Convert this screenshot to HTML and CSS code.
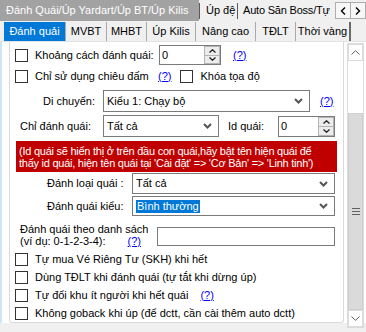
FILE: index.html
```html
<html>
<head>
<meta charset="utf-8">
<link rel="stylesheet" href="styles.css">
</head>
<body>

<div class="tabs-top">
  <div class="ttab active w199">Đánh Quái/Úp Yardart/Úp BT/Úp Kilis</div>
  <span class="vsep"></span>
  <div class="ttab w37">Úp đệ</div>
  <span class="vsep"></span>
  <div class="ttab clip">Auto Săn Boss/Tự</div>
  <div class="arrows">
    <span class="arr"><svg width="6" height="8" viewBox="0 0 6 8"><polyline points="5,0.5 1.5,4 5,7.5" fill="none" stroke="#000" stroke-width="1.4"/></svg></span>
    <span class="arr"><svg width="6" height="8" viewBox="0 0 6 8"><polyline points="1,0.5 4.5,4 1,7.5" fill="none" stroke="#000" stroke-width="1.4"/></svg></span>
  </div>
</div>

<div class="tabs-sub">
  <div class="stab active w62">Đánh quải</div>
  <div class="stab w41">MVBT</div>
  <div class="stab w40">MHBT</div>
  <div class="stab w49">Úp Kilis</div>
  <div class="stab w60">Nâng cao</div>
  <div class="stab w40">TĐLT</div>
  <div class="stab last w55">Thời vàng</div>
</div>

<div class="page">
  <div class="group">

    <div class="row ra">
      <span class="cb"></span>
      <span class="lbl w124">Khoảng cách đánh quái:</span>
      <div class="num w62">
        <span class="val">0</span>
        <div class="spin">
          <span class="sb"><svg width="7" height="4" viewBox="0 0 7 4"><polyline points="0.5,3.5 3.5,0.8 6.5,3.5" fill="none" stroke="#222" stroke-width="1.3"/></svg></span>
          <span class="sb"><svg width="7" height="4" viewBox="0 0 7 4"><polyline points="0.5,0.5 3.5,3.2 6.5,0.5" fill="none" stroke="#222" stroke-width="1.3"/></svg></span>
        </div>
      </div>
      <a class="help ml12">(?)</a>
    </div>

    <div class="row rb">
      <span class="cb"></span>
      <span class="lbl w123">Chỉ sử dụng chiêu đấm</span>
      <a class="help">(?)</a>
      <span class="cb ml9"></span>
      <span class="lbl">Khóa tọa độ</span>
    </div>

    <div class="row rc">
      <span class="txt ml33 w60">Di chuyển:</span>
      <div class="sel w207">
        <span>Kiểu 1: Chạy bộ</span>
        <svg class="chev" width="9" height="6" viewBox="0 0 9 6"><polyline points="1,1 4.5,4.5 8,1" fill="none" stroke="#555" stroke-width="2"/></svg>
      </div>
      <a class="help ml10">(?)</a>
    </div>

    <div class="row rd">
      <span class="txt ml10 w83">Chỉ đánh quái:</span>
      <div class="sel w116">
        <span>Tất cả</span>
        <svg class="chev" width="9" height="6" viewBox="0 0 9 6"><polyline points="1,1 4.5,4.5 8,1" fill="none" stroke="#555" stroke-width="2"/></svg>
      </div>
      <span class="txt ml9 w50">Id quái:</span>
      <div class="num w57 h21">
        <span class="val">0</span>
        <div class="spin">
          <span class="sb"><svg width="7" height="4" viewBox="0 0 7 4"><polyline points="0.5,3.5 3.5,0.8 6.5,3.5" fill="none" stroke="#222" stroke-width="1.3"/></svg></span>
          <span class="sb"><svg width="7" height="4" viewBox="0 0 7 4"><polyline points="0.5,0.5 3.5,3.2 6.5,0.5" fill="none" stroke="#222" stroke-width="1.3"/></svg></span>
        </div>
      </div>
    </div>

    <div class="note">(Id quái sẽ hiển thị ở trên đầu con quái,hãy bật tên hiện quái để<br>thấy id quái, hiện tên quái tại 'Cài đặt' =&gt; 'Cơ Bản' =&gt; 'Linh tinh')</div>

    <div class="row re">
      <span class="txt ml37 w85">Đánh loại quái :</span>
      <div class="sel w203 h21">
        <span>Tất cả</span>
        <svg class="chev" width="9" height="6" viewBox="0 0 9 6"><polyline points="1,1 4.5,4.5 8,1" fill="none" stroke="#555" stroke-width="2"/></svg>
      </div>
    </div>

    <div class="row rf">
      <span class="txt ml37 w85">Đánh quái kiểu:</span>
      <div class="sel w203 h20">
        <span class="hl">Bình thường</span>
        <svg class="chev" width="9" height="6" viewBox="0 0 9 6"><polyline points="1,1 4.5,4.5 8,1" fill="none" stroke="#555" stroke-width="2"/></svg>
      </div>
    </div>

    <div class="row rg">
      <span class="txt ml10 w137 two">Đánh quái theo danh sách<br>(ví dụ: 0-1-2-3-4):<a class="help ml22">(?)</a></span>
      <div class="input w178"></div>
    </div>

    <div class="row rk">
      <span class="cb"></span>
      <span class="lbl">Tự mua Vé Riêng Tư (SKH) khi hết</span>
    </div>
    <div class="row rk">
      <span class="cb"></span>
      <span class="lbl">Dùng TĐLT khi đánh quái (tự tắt khi dừng úp)</span>
    </div>
    <div class="row rk">
      <span class="cb"></span>
      <span class="lbl">Tự đổi khu ít người khi hết quái</span>
      <a class="help ml12">(?)</a>
    </div>
    <div class="row rk">
      <span class="cb"></span>
      <span class="lbl">Không goback khi úp (để dctt, cần cài thêm auto dctt)</span>
    </div>

  </div>

  <div class="vscroll">
    <span class="vbtn"><svg width="9" height="5" viewBox="0 0 9 5"><polyline points="0.5,4.5 4.5,0.7 8.5,4.5" fill="none" stroke="#606060" stroke-width="1"/></svg></span>
    <span class="track"></span>
    <span class="thumb"><svg width="8" height="7" viewBox="0 0 8 7"><rect x="0" y="0" width="8" height="1" fill="#606060"/><rect x="0" y="3" width="8" height="1" fill="#606060"/><rect x="0" y="6" width="8" height="1" fill="#606060"/></svg></span>
    <span class="vbtn"><svg width="9" height="5" viewBox="0 0 9 5"><polyline points="0.5,0.5 4.5,4.3 8.5,0.5" fill="none" stroke="#606060" stroke-width="1"/></svg></span>
  </div>
</div>

</body>
</html>
```

FILE: styles.css
```css
* {
  box-sizing: border-box;
}

body {
  margin: 0;
  width: 366px;
  height: 332px;
  overflow: hidden;
  background: #f0f0f0;
  color: #000;
  font-family: "Liberation Sans", Arial, sans-serif;
  font-size: 11px;
  line-height: 13px;
}

/* top tab strip */
.tabs-top {
  display: flex;
  height: 21px;
  align-items: center;
}

.ttab {
  height: 21px;
  padding: 4px 0 0 6px;
  white-space: nowrap;
  overflow: hidden;
}

.ttab.active {
  background: #a2a2a2;
  color: #fff;
}

.ttab.clip {
  flex: 1;
  padding-left: 5px;
  letter-spacing: -0.2px;
}

.vsep {
  width: 1px;
  height: 16px;
  background: #5a5a5a;
}

.arrows {
  display: flex;
  width: 31px;
  height: 17px;
}

.arr {
  flex: 1;
  display: flex;
  align-items: center;
  justify-content: center;
  border: 1px solid #adadad;
  background: #f7f7f7;
}

.arr + .arr {
  border-left: none;
}

/* second tab strip */
.tabs-sub {
  display: flex;
  height: 21px;
  padding: 1px 0 0 4px;
  border-bottom: 1px solid #e3e3e3;
}

.stab {
  height: 19px;
  padding-top: 3px;
  text-align: center;
  border-right: 1px solid #a9a9a9;
  white-space: nowrap;
}

.stab.active {
  background: #0078d7;
  color: #fff;
}

.stab.last {
  border-right: 2px solid #6a6a6a;
}

/* page */
.page {
  display: flex;
  height: 281px;
  background: #fff;
  border-left: 2px solid #cfe5f7;
}

.group {
  width: 335px;
  height: 281px;
  margin-left: 7px;
  border: 1px solid #dadada;
  border-top: none;
  border-radius: 0 0 3px 3px;
}

.row {
  display: flex;
  align-items: center;
  padding-left: 5px;
}

.ra { height: 20px; margin-top: 3px; }
.rb { height: 18px; margin-top: 2px; }
.rc { height: 22px; margin-top: 5px; padding-left: 0; }
.rd { height: 22px; margin-top: 3px; padding-left: 0; }
.re { height: 21px; margin-top: 1px; padding-left: 0; }
.rf { height: 20px; margin-top: 2px; padding-left: 0; }
.rg { height: 23px; margin-top: 7px; padding-left: 0; align-items: flex-start; }
.rk { height: 18px; }
.rg + .rk { margin-top: 4px; }

.cb {
  flex: none;
  width: 13px;
  height: 13px;
  border: 1px solid #333;
  background: #fff;
}

.lbl {
  margin-left: 7px;
  white-space: nowrap;
}

.txt {
  flex: none;
  white-space: nowrap;
}

.two {
  line-height: 12px;
}

.help {
  color: #0000ff;
  text-decoration: underline;
  white-space: nowrap;
}

/* controls */
.num {
  flex: none;
  display: flex;
  height: 20px;
  border: 1px solid #7a7a7a;
  background: #fff;
}

.val {
  flex: 1;
  padding: 3px 0 0 2px;
}

.spin {
  width: 16px;
  display: flex;
  flex-direction: column;
  background: #e8e8e8;
}

.sb {
  flex: 1;
  display: flex;
  align-items: center;
  justify-content: center;
  background: #ececec;
  border: 1px solid #b4b4b4;
}

.sb + .sb {
  border-top: none;
}

.sel {
  flex: none;
  display: flex;
  align-items: center;
  justify-content: space-between;
  height: 22px;
  padding: 0 6px 0 3px;
  border: 1px solid #7a7a7a;
  background: #fff;
  white-space: nowrap;
}

.hl {
  background: #0078d7;
  color: #fff;
  padding: 0 1px;
}

.input {
  flex: none;
  height: 19px;
  margin-top: 4px;
  border: 1px solid #7a7a7a;
  background: #fff;
}

.note {
  width: 321px;
  height: 31px;
  margin: 4px 0 0 6px;
  padding: 4px 3px 0;
  background: #c00000;
  color: #fff;
  line-height: 12px;
  letter-spacing: -0.25px;
  white-space: nowrap;
  overflow: hidden;
}

/* scrollbar */
.vscroll {
  flex: none;
  display: flex;
  flex-direction: column;
  width: 17px;
  height: 285px;
  margin: 1px 0 0 3px;
  border: 1px solid #dcdcdc;
  background: #fff;
}

.vbtn {
  height: 17px;
  display: flex;
  align-items: center;
  justify-content: center;
  border: 1px solid #dcdcdc;
  background: #fff;
}

.track {
  height: 52px;
}

.thumb {
  flex: 1;
  display: flex;
  align-items: center;
  justify-content: center;
  background: #dadada;
  border: 1px solid #cfcfcf;
}

/* sizes */
.w37 { width: 37px; flex: none; }
.w40 { width: 40px; }
.w41 { width: 41px; }
.w49 { width: 49px; }
.w50 { width: 50px; }
.w55 { width: 55px; }
.w57 { width: 57px; }
.w60 { width: 60px; }
.w62 { width: 62px; }
.w83 { width: 83px; }
.w85 { width: 85px; }
.w116 { width: 116px; }
.w123 { width: 123px; }
.w124 { width: 124px; }
.w137 { width: 137px; }
.w178 { width: 178px; }
.w199 { width: 199px; flex: none; }
.w203 { width: 203px; }
.w207 { width: 207px; }
.h20 { height: 20px; }
.h21 { height: 21px; }

.ml9 { margin-left: 9px; }
.ml10 { margin-left: 10px; }
.ml12 { margin-left: 12px; }
.ml22 { margin-left: 22px; }
.ml33 { margin-left: 33px; }
.ml37 { margin-left: 37px; }
```
